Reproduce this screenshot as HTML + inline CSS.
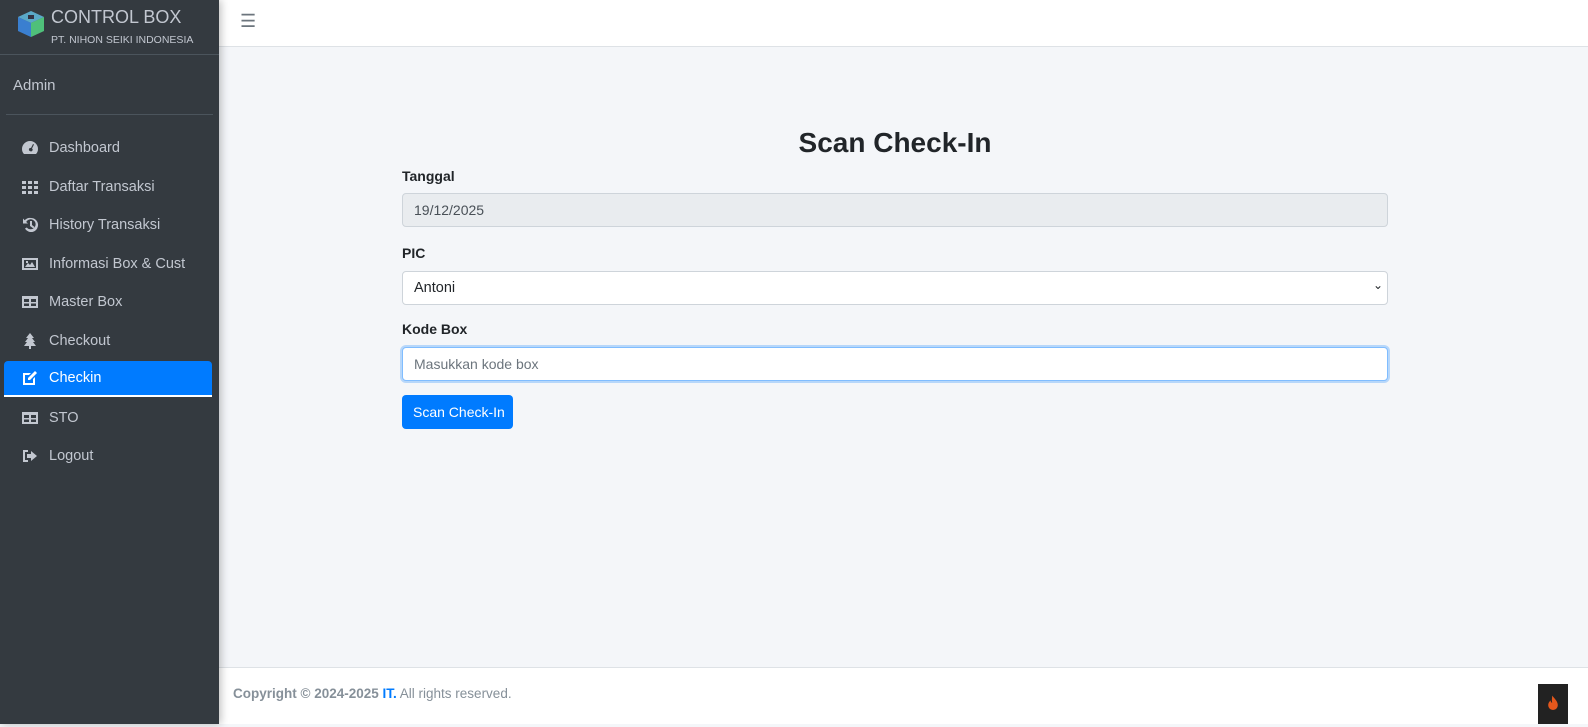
<!DOCTYPE html>
<html><head><meta charset="utf-8"><style>
*{box-sizing:border-box;margin:0;padding:0}
body{width:1588px;height:724px;overflow:hidden;font-family:"Liberation Sans",sans-serif;background:#f4f6f9;position:relative;font-size:15px;color:#212529}
.sb{position:absolute;left:0;top:0;width:219px;height:724px;background:#343a40;box-shadow:2px 0 8px rgba(0,0,0,.25);z-index:2}
.brand{height:55px;border-bottom:1px solid #4b545c;position:relative}
.brand .t1{position:absolute;left:51px;top:7px;color:#c2c7d0;font-size:18px}
.brand .t2{position:absolute;left:51px;top:34px;color:#c2c7d0;font-size:10.5px}
.logo{position:absolute;left:17px;top:10px;width:28px;height:28px}
.user{height:60px;border-bottom:1px solid #4b545c;margin:0 6px 0 6px;color:#c2c7d0;padding:22px 0 0 7px;font-size:15px}
.nav{margin-top:15px}
.it{height:36px;margin:0 7px 2.5px 4px;display:flex;align-items:center;color:#c2c7d0;font-size:14.5px;border-radius:4px;padding-left:17px}
.it svg{width:18px;height:16px;margin-right:10px;fill:#c2c7d0}
.it.a{background:#007bff;color:#fff;border-bottom:2px solid #fff;border-radius:4px 4px 0 0}
.it.a svg{fill:#fff}
.hd{position:absolute;left:219px;top:0;right:0;height:47px;background:#fff;border-bottom:1px solid #dee2e6}
.hd span{position:absolute;left:21px;top:11px;color:#6c757d;font-size:18px}
h1{position:absolute;left:402px;width:986px;top:127px;text-align:center;font-size:28px;font-weight:bold;color:#212529}
.f{position:absolute;left:402px;width:986px}
label{position:absolute;left:402px;font-weight:bold;font-size:14px}
.in{height:34px;border:1px solid #ced4da;border-radius:4px;background:#fff;padding:8px 11px;font-size:14px;color:#495057}
.btn{position:absolute;left:402px;top:395px;width:111px;height:34px;background:#007bff;color:#fff;border-radius:4px;font-size:14px;padding:9px 0 0 11px}
.ft{position:absolute;left:219px;right:0;top:667px;height:57px;background:#fff;border-top:1px solid #dee2e6;padding:18px 14px;font-size:13.5px;color:#869099}
</style></head><body>
<div class="sb">
 <div class="brand">
  <svg class="logo" viewBox="0 0 28 28"><polygon points="14,1 27,7 27,21 14,27 1,21 1,7" fill="#4a5560"/><polygon points="14,1 27,7 14,13 1,7" fill="#5aa9c8"/><polygon points="1,7 14,13 14,27 1,21" fill="#3a7fd0"/><polygon points="14,13 27,7 27,21 14,27" fill="#4fc07a"/><rect x="11" y="5" width="6" height="4" fill="#334"/></svg>
  <div class="t1">CONTROL BOX</div><div class="t2">PT. NIHON SEIKI INDONESIA</div>
 </div>
 <div class="user">Admin</div>
 <div class="nav">
  <div class="it"><svg viewBox="0 0 18 16"><path d="M9 1a8 8 0 0 0-8 8c0 2 .7 3.8 2 5h12c1.3-1.2 2-3 2-5a8 8 0 0 0-8-8zm0 10a1.5 1.5 0 1 1 1-3l2-4 1 .5-2 4A1.5 1.5 0 0 1 9 11z"/></svg>Dashboard</div>
  <div class="it"><svg viewBox="0 0 18 16"><path d="M1 2h4v3H1zM7 2h4v3H7zM13 2h4v3h-4zM1 7h4v3H1zM7 7h4v3H7zM13 7h4v3h-4zM1 12h4v3H1zM7 12h4v3H7zM13 12h4v3h-4z"/></svg>Daftar Transaksi</div>
  <div class="it"><svg viewBox="0 0 18 16"><path d="M10 1a7 7 0 1 1-6 10.5l1.8-1A5 5 0 1 0 5.2 5L7 6.5H2V1.5L3.7 3.3A7 7 0 0 1 10 1zm-1 3h2v4l2.5 2-1.2 1.4L9 9z"/></svg>History Transaksi</div>
  <div class="it"><svg viewBox="0 0 18 16"><path d="M1 2h16v12H1zm2 2v8h12V4zm1 7l3-4 2 2 2-3 3 5zM5 5h2v2H5z"/></svg>Informasi Box &amp; Cust</div>
  <div class="it"><svg viewBox="0 0 18 16"><path d="M1 2h16v12H1zm2 3v3h5V5zm7 0v3h5V5zM3 9.5V12h5V9.5zm7 0V12h5V9.5z"/></svg>Master Box</div>
  <div class="it"><svg viewBox="0 0 18 16"><path d="M9 0l4 5h-2l3 4h-2l3 4h-5v3H8v-3H3l3-4H4l3-4H5z"/></svg>Checkout</div>
  <div class="it a"><svg viewBox="0 0 18 16"><path d="M2 3h8l-2 2H4v8h8V9l2-2v8H2zM14 1l2 2-7 7H7V8z"/></svg>Checkin</div>
  <div class="it"><svg viewBox="0 0 18 16"><path d="M1 2h16v12H1zm2 3v3h5V5zm7 0v3h5V5zM3 9.5V12h5V9.5zm7 0V12h5V9.5z"/></svg>STO</div>
  <div class="it"><svg viewBox="0 0 18 16"><path d="M2 2h5v2H4v8h3v2H2zm8 1l6 5-6 5V10H6V6h4z"/></svg>Logout</div>
 </div>
</div>
<div class="hd"><span>&#9776;</span></div>
<h1>Scan Check-In</h1>
<label style="top:168px">Tanggal</label>
<div class="f in" style="top:193px;background:#e9ecef">19/12/2025</div>
<label style="top:245px">PIC</label>
<div class="f in" style="top:271px;color:#212529;font-size:14.5px">Antoni<span style="position:absolute;right:4px;top:6px;font-size:12px">&#8964;</span></div>
<label style="top:321px">Kode Box</label>
<div class="f in" style="top:347px;border-color:#80bdff;box-shadow:0 0 0 2px rgba(0,123,255,.25);color:#6c757d">Masukkan kode box</div>
<div class="btn">Scan Check-In</div>
<div class="ft"><b style="color:#869099">Copyright © 2024-2025 <span style="color:#007bff">IT.</span></b> All rights reserved.</div>
<div style="position:absolute;left:1538px;top:684px;width:30px;height:40px;background:#222"><svg viewBox="0 0 20 24" style="width:16px;margin:10px 7px"><path d="M9 2c3 4 7 7 7 12a6 6 0 0 1-12 0c0-3 2-5 3-6 0 2 1 3 2 3-1-3 0-6 0-9z" fill="#e4571c"/></svg></div>
</body></html>
